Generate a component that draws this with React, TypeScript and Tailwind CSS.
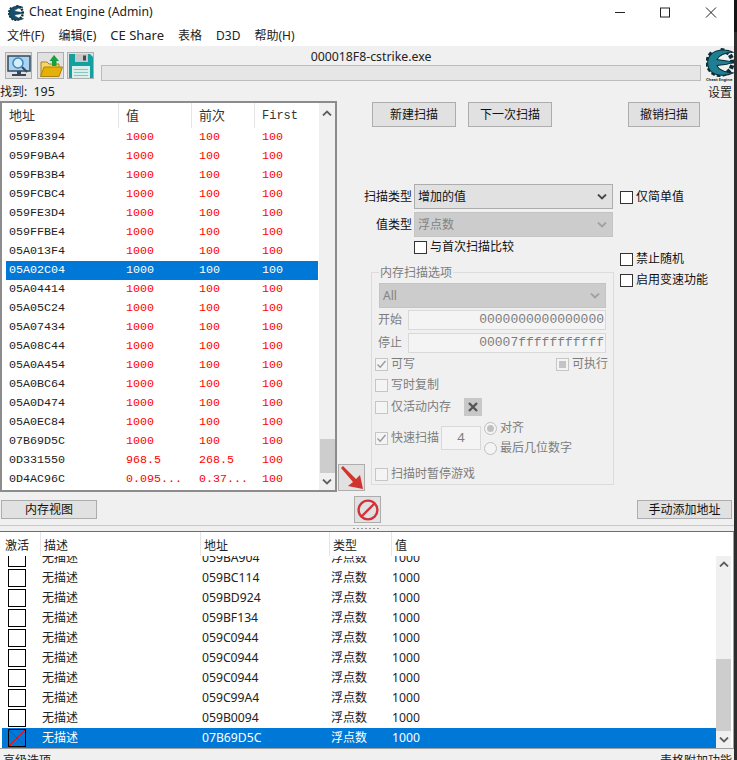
const cjk = "font-['Noto_Sans','Noto_Sans_CJK_SC',sans-serif]";

const scanRows = [
  ["059F8394", "1000", "100", "100"],
  ["059F9BA4", "1000", "100", "100"],
  ["059FB3B4", "1000", "100", "100"],
  ["059FCBC4", "1000", "100", "100"],
  ["059FE3D4", "1000", "100", "100"],
  ["059FFBE4", "1000", "100", "100"],
  ["05A013F4", "1000", "100", "100"],
  ["05A02C04", "1000", "100", "100"],
  ["05A04414", "1000", "100", "100"],
  ["05A05C24", "1000", "100", "100"],
  ["05A07434", "1000", "100", "100"],
  ["05A08C44", "1000", "100", "100"],
  ["05A0A454", "1000", "100", "100"],
  ["05A0BC64", "1000", "100", "100"],
  ["05A0D474", "1000", "100", "100"],
  ["05A0EC84", "1000", "100", "100"],
  ["07B69D5C", "1000", "100", "100"],
  ["0D331550", "968.5", "268.5", "100"],
  ["0D4AC96C", "0.095...", "0.37...", "100"],
];

const tableRows = [
  "059BA904",
  "059BC114",
  "059BD924",
  "059BF134",
  "059C0944",
  "059C0944",
  "059C0944",
  "059C99A4",
  "059B0094",
  "07B69D5C",
];

function CeLogo({ w, h, fill, line }: { w: number; h: number; fill: string; line: string }) {
  const teeth = [100, 125, 150, 175, 200, 225, 250, 275, 300, 325, 350, 15, 40];
  return (
    <svg width={w} height={h} viewBox="0 0 32 34">
      <g fill={line}>
        {teeth.map((a) => (
          <rect key={a} x="14" y="0" width="4.5" height="5" transform={`rotate(${a - 90} 16 17)`} />
        ))}
      </g>
      <path
        d="M31 5 C24 1 12 1.500 6 7 C0 13 0 22 6 28 C12 33 24 33 32 29 C25 29 15 27 12.500 20.500 L24 19 L32 16.500 L12.500 13.500 C15 8 24 5.500 31 5 Z"
        fill={fill}
        stroke={line}
        strokeWidth="1.2"
      />
    </svg>
  );
}

function ScanIcon() {
  return (
    <svg width="24" height="22" viewBox="0 0 24 22">
      <rect x="1" y="1" width="22" height="15" fill="#a9d3f2" stroke="#36495a" strokeWidth="1.5" />
      <rect x="10" y="16" width="4" height="3" fill="#36495a" />
      <rect x="5" y="19" width="14" height="2" fill="#36495a" />
      <circle cx="11" cy="8" r="5" fill="#d5ecfb" stroke="#3f86bd" strokeWidth="1.5" />
      <path d="M15 12 L20 17" stroke="#36495a" strokeWidth="2" />
    </svg>
  );
}

function FolderIcon() {
  return (
    <svg width="24" height="24" viewBox="0 0 24 24">
      <path d="M2 8 H8 L10 10 H20 V22 H2 Z" fill="#f5d66a" stroke="#a88414" />
      <path d="M5 13 H23.500 L20 22.500 H1.500 Z" fill="#e5b108" stroke="#a88414" />
      <path d="M15 1 L20 7 H17.500 V12 H13 V7 H10.500 Z" fill="#17a03e" />
    </svg>
  );
}

function SaveIcon() {
  return (
    <svg width="24" height="24" viewBox="0 0 24 24">
      <path d="M0 0 H21 L24 3 V24 H0 Z" fill="#14a0a0" />
      <rect x="6" y="0" width="13" height="8" fill="#c8c8c8" />
      <rect x="14" y="1.500" width="3" height="5" fill="#4a4a4a" />
      <rect x="3" y="12" width="18" height="12" fill="#d9f0ea" />
      <path d="M5 15.500 H19 M5 18.500 H19 M5 21.500 H19" stroke="#8cc4bd" />
    </svg>
  );
}

function ArrowIcon() {
  return (
    <svg width="24" height="24" viewBox="0 0 24 24">
      <path d="M1 2 L3 0 L16 13 L20 9 L23 23 L8 20 L13 16 Z" fill="#d2332c" />
    </svg>
  );
}

function StopIcon() {
  return (
    <svg width="24" height="24" viewBox="0 0 24 24" fill="none" stroke="#d2333a" strokeWidth="2.400">
      <circle cx="12" cy="12" r="9.400" />
      <path d="M5.500 18.500 L18.500 5.500" />
    </svg>
  );
}

function Chevron({ up, color = "#5f5f5f" }: { up?: boolean; color?: string }) {
  return (
    <svg width="10" height="6" viewBox="0 0 10 6" fill="none" stroke={color} strokeWidth="1.800">
      <path d={up ? "M1 5.500 L5 1.500 L9 5.500" : "M1 0.500 L5 4.500 L9 0.500"} />
    </svg>
  );
}

function SelectBox({ text, disabled, w }: { text: string; disabled?: boolean; w: string }) {
  return (
    <div
      className={`flex h-[25px] shrink-0 items-center justify-between border pl-[3px] pr-[5px] text-[12px] ${w} ${
        disabled ? "border-[#c4c4c4] bg-[#cccccc] text-[#838383]" : "border-[#adadad] bg-[#e1e1e1] text-[#111]"
      }`}
    >
      <span>{text}</span>
      <Chevron color={disabled ? "#a0a0a0" : "#444"} />
    </div>
  );
}

function Check({ label, disabled, state }: { label: string; disabled?: boolean; state?: "tick" | "mixed" }) {
  return (
    <div className={`flex h-[20px] items-center gap-[3px] text-[12px] ${disabled ? "text-[#7d7d7d]" : "text-[#111]"}`}>
      <span
        className={`flex h-[13px] w-[13px] items-center justify-center border ${
          disabled ? "border-[#c6c6c6] bg-[#f4f4f4]" : "border-[#333] bg-white"
        }`}
      >
        {state === "tick" && (
          <svg width="11" height="11" viewBox="0 0 11 11" fill="none" stroke="#9a9a9a" strokeWidth="1.400">
            <path d="M1.500 5.500 L4.200 8.200 L9.500 2" />
          </svg>
        )}
        {state === "mixed" && <span className="h-[7px] w-[7px] bg-[#c4c4c4]" />}
      </span>
      <span>{label}</span>
    </div>
  );
}

function Radio({ label, on }: { label: string; on?: boolean }) {
  return (
    <div className="flex h-[16px] items-center gap-[3px] text-[12px] text-[#7d7d7d]">
      <span className="flex h-[13px] w-[13px] items-center justify-center rounded-full border border-[#c0c0c0] bg-[#f4f4f4]">
        {on && <span className="h-[7px] w-[7px] rounded-full bg-[#c0c0c0]" />}
      </span>
      <span>{label}</span>
    </div>
  );
}

function Btn({ text, w, h = "h-[25px]" }: { text: string; w: string; h?: string }) {
  return (
    <div className={`flex items-center justify-center border border-[#adadad] bg-[#e1e1e1] text-[12px] text-[#111] ${w} ${h}`}>
      {text}
    </div>
  );
}

function IconBtn({ children }: { children: React.ReactNode }) {
  return (
    <div className="flex h-[27px] w-[27px] items-center justify-center overflow-hidden border border-[#adadad] bg-[#e1e1e1]">
      {children}
    </div>
  );
}

export default function App() {
  return (
    <div className={`flex h-[760px] w-[737px] overflow-hidden ${cjk}`}>
      <div className="flex h-full w-[734px] shrink-0 flex-col bg-white">
        {/* title bar */}
        <div className="flex h-[25px] shrink-0 items-center pl-[8px] text-[12.200px] text-[#222]">
          <CeLogo w={16} h={16} fill="#14506e" line="#0b2f3a" />
          <span className="ml-[5px] flex-1">Cheat Engine (Admin)</span>
          <svg width="110" height="25" viewBox="0 0 110 25" fill="none" stroke="#222" className="mr-[9px]">
            <path d="M0 12.500 H10" />
            <rect x="45.500" y="8" width="9" height="9" />
            <path d="M91 7.500 L101 17.500 M101 7.500 L91 17.500" />
          </svg>
        </div>
        {/* menu */}
        <div className="flex h-[21px] shrink-0 items-center gap-[14px] pl-[7px] text-[12px] text-[#222]">
          <span>文件(F)</span>
          <span>编辑(E)</span>
          <span className="text-[13px]">CE Share</span>
          <span>表格</span>
          <span>D3D</span>
          <span>帮助(H)</span>
        </div>

        <div className="flex flex-1 flex-col bg-[#f0f0f0]">
          {/* toolbar */}
          <div className="flex h-[55px] shrink-0">
            <div className="flex w-[101px] shrink-0 flex-col pl-[5px] pt-[6px]">
              <div className="flex gap-[3px]">
                <div className="mr-[2px]"><IconBtn><ScanIcon /></IconBtn></div>
                <IconBtn><FolderIcon /></IconBtn>
                <IconBtn><SaveIcon /></IconBtn>
              </div>
              <div className="-ml-[5px] mt-[5px] whitespace-pre text-[12px] leading-[16px] text-[#222]">
                找到:  <span className="text-[12.500px]">195</span>
              </div>
            </div>
            <div className="flex w-[600px] shrink-0 flex-col">
              <div className="mt-[3px] pr-[60px] text-center text-[12.300px] leading-[16px] text-[#222]">000018F8-cstrike.exe</div>
              <div className="h-[16px] border border-[#bcbcbc] bg-[#e6e6e6]" />
            </div>
            <div className="flex flex-1 flex-col items-start pl-[5px] pt-[2px]">
              <CeLogo w={28} h={34} fill="#1f7f92" line="#0b2f3a" />
              <span className="h-[5px] whitespace-nowrap text-[4px] font-bold leading-[5px] text-[#0b2f3a]">Cheat Engine</span>
              <span className="ml-[2px] mt-[3px] text-[12px] leading-[16px] text-[#222]">设置</span>
            </div>
          </div>

          {/* scan area */}
          <div className="flex shrink-0">
            {/* result list */}
            <div className="flex h-[391px] w-[337px] shrink-0 overflow-hidden border-2 border-[#8c8c8c] bg-white font-['Liberation_Mono','Noto_Sans_CJK_SC',monospace] text-[11.700px]">
              <div className="flex-1 overflow-hidden">
                <div className="flex h-[25px] items-center text-[#333]">
                  <span className="h-full w-[117px] border-r border-[#e5e5e5] pl-[7px] text-[13px] leading-[27px]">地址</span>
                  <span className="h-full w-[73px] border-r border-[#e5e5e5] pl-[7px] text-[13px] leading-[27px]">值</span>
                  <span className="h-full w-[63px] border-r border-[#e5e5e5] pl-[7px] text-[13px] leading-[27px]">前次</span>
                  <span className="h-full w-[64px] pl-[7px] text-[12px] leading-[27px]">First</span>
                </div>
                <div className="ml-[4px] mr-[1px]">
                  {scanRows.map(([addr, val, prev, first], i) => {
                    const sel = i === 7;
                    return (
                      <div key={addr} className={`flex h-[19px] items-center ${sel ? "bg-[#0078d7] text-white" : "text-[#222]"}`}>
                        <span className="w-[117px] pl-[3px]">{addr}</span>
                        <span className={`w-[73px] pl-[3px] ${sel ? "" : "text-[#ff0000]"}`}>{val}</span>
                        <span className={`w-[63px] pl-[3px] ${sel ? "" : "text-[#ff0000]"}`}>{prev}</span>
                        <span className={`w-[59px] pl-[3px] ${sel ? "" : "text-[#ff0000]"}`}>{first}</span>
                      </div>
                    );
                  })}
                </div>
              </div>
              <div className="flex w-[16px] shrink-0 flex-col items-center bg-[#f0f0f0] pt-[7px]">
                <Chevron up />
                <div className="mt-[323px] h-[34px] w-[15px] bg-[#cdcdcd]" />
                <div className="mt-[6px]"><Chevron /></div>
              </div>
            </div>

            {/* arrow */}
            <div className="flex w-[34px] shrink-0 flex-col justify-end pb-[1px] pl-[1px]">
              <IconBtn><ArrowIcon /></IconBtn>
            </div>

            {/* scan form */}
            <div className="flex flex-1 flex-col">
              <div className="mt-[1px] flex pl-[1px]">
                <Btn text="新建扫描" w="w-[84px]" />
                <div className="ml-[12px]"><Btn text="下一次扫描" w="w-[84px]" /></div>
                <div className="ml-[76px]"><Btn text="撤销扫描" w="w-[72px]" /></div>
              </div>
              <div className="mt-[57px] flex">
                <div className="w-[243px] shrink-0">
                  <div className="flex items-center justify-end gap-[2px] pr-[1px] text-[12px] text-[#111]">
                    <span className="whitespace-nowrap">扫描类型</span>
                    <SelectBox text="增加的值" w="w-[199px]" />
                  </div>
                  <div className="mt-[3px] flex items-center justify-end gap-[2px] pr-[1px] text-[12px] text-[#111]">
                    <span className="whitespace-nowrap">值类型</span>
                    <SelectBox text="浮点数" disabled w="w-[199px]" />
                  </div>
                  <div className="h-[20px] pl-[43px]">
                    <Check label="与首次扫描比较" />
                  </div>
                  {/* memory options group */}
                  <div className="relative mt-[15px] h-[213px] w-[243px] border border-[#dcdcdc] px-[7px] pt-[10px]">
                    <span className="absolute -top-[9px] left-[7px] bg-[#f0f0f0] px-[1px] text-[12px] leading-[17px] text-[#7d7d7d]">内存扫描选项</span>
                    <SelectBox text="All" disabled w="w-[227px]" />
                    <div className="-ml-[1px] mt-[2px] flex h-[20px] items-center text-[12px] text-[#7d7d7d]">
                      <span className="w-[30px] shrink-0">开始</span>
                      <div className="flex h-[20px] flex-1 items-center justify-end border border-[#d9d9d9] bg-[#f4f4f4] pr-[1px] font-['Liberation_Mono',monospace] text-[13px]">0000000000000000</div>
                    </div>
                    <div className="-ml-[1px] mt-[3px] flex h-[20px] items-center text-[12px] text-[#7d7d7d]">
                      <span className="w-[30px] shrink-0">停止</span>
                      <div className="flex h-[20px] flex-1 items-center justify-end border border-[#d9d9d9] bg-[#f4f4f4] pr-[1px] font-['Liberation_Mono',monospace] text-[13px]">00007fffffffffff</div>
                    </div>
                    <div className="-ml-[4px] -mr-[2px] mt-[1px] flex h-[20px] items-center justify-between">
                      <Check label="可写" disabled state="tick" />
                      <Check label="可执行" disabled state="mixed" />
                    </div>
                    <div className="-ml-[4px] mt-[1px] flex h-[20px] items-center">
                      <Check label="写时复制" disabled />
                    </div>
                    <div className="-ml-[4px] mt-[2px] flex h-[20px] items-center">
                      <Check label="仅活动内存" disabled />
                      <div className="ml-[13px] flex h-[18px] w-[18px] items-center justify-center bg-[#c8c8c8] text-[#555]">
                        <svg width="10" height="10" viewBox="0 0 10 10" stroke="currentColor" strokeWidth="2.400">
                          <path d="M1 1 L9 9 M9 1 L1 9" />
                        </svg>
                      </div>
                    </div>
                    <div className="-ml-[4px] mt-[9px] flex h-[24px] items-center">
                      <Check label="快速扫描" disabled state="tick" />
                      <div className="ml-[2px] flex h-[24px] w-[40px] items-center justify-center border border-[#d9d9d9] bg-[#f4f4f4] text-[13px] text-[#7d7d7d]">4</div>
                      <div className="ml-[3px] flex flex-col gap-[4px]">
                        <Radio label="对齐" on />
                        <Radio label="最后几位数字" />
                      </div>
                    </div>
                    <div className="-ml-[4px] mt-[14px] flex h-[20px] items-center">
                      <Check label="扫描时暂停游戏" disabled />
                    </div>
                  </div>
                </div>
                <div className="ml-[6px] flex flex-col pt-[3px]">
                  <Check label="仅简单值" />
                  <div className="mt-[42px]"><Check label="禁止随机" /></div>
                  <div className="mt-[1px]"><Check label="启用变速功能" /></div>
                </div>
              </div>
            </div>
          </div>

          {/* bottom buttons */}
          <div className="flex h-[33px] shrink-0 items-center pl-[1px] pr-[2px] pt-[2px]">
            <Btn text="内存视图" w="w-[96px]" h="h-[19px]" />
            <div className="ml-[257px]"><IconBtn><StopIcon /></IconBtn></div>
            <div className="ml-auto"><Btn text="手动添加地址" w="w-[95px]" h="h-[19px]" /></div>
          </div>

          {/* splitter */}
          <div className="relative h-[7px] shrink-0 border-y border-t-[#c8c8c8] border-b-[#6e6e6e]">
            <span className="absolute left-[353px] top-[2px] h-[1px] w-[28px] bg-[repeating-linear-gradient(90deg,#999_0_2px,transparent_2px_4px)]" />
          </div>

          {/* address table */}
          <div className="flex h-[217px] shrink-0 flex-col overflow-hidden border-b border-r border-[#a0a0a0] bg-white text-[12px] text-[#222]">
            <div className="relative z-10 flex h-[24px] shrink-0 items-start overflow-hidden bg-white">
              <span className="h-full w-[41px] border-r border-[#e5e5e5] pl-[5px] leading-[28px]">激活</span>
              <span className="h-full w-[160px] border-r border-[#e5e5e5] pl-[3px] leading-[28px]">描述</span>
              <span className="h-full w-[129px] border-r border-[#e5e5e5] pl-[3px] leading-[28px]">地址</span>
              <span className="h-full w-[62px] border-r border-[#e5e5e5] pl-[3px] leading-[28px]">类型</span>
              <span className="h-full pl-[3px] leading-[28px]">值</span>
            </div>
            <div className="flex h-[192px] shrink-0">
              <div className="-mt-[8px] flex-1 pl-[2px]">
                {tableRows.map((addr, i) => {
                  const sel = i === 9;
                  return (
                    <div key={i} className={`flex h-[20px] items-center ${sel ? "bg-[#0078d7] text-white" : ""}`}>
                      <span className="flex w-[40px] pl-[6px]">
                        <span className="relative h-[18px] w-[18px] border border-black">
                          {sel && (
                            <svg width="16" height="16" viewBox="0 0 16 16" stroke="#ff0000" className="absolute inset-0">
                              <path d="M0 16 L16 0 M0 0 L16 16" />
                            </svg>
                          )}
                        </span>
                      </span>
                      <span className="w-[160px]">无描述</span>
                      <span className="w-[129px] text-[12.200px]">{addr}</span>
                      <span className="w-[61px]">浮点数</span>
                      <span className="text-[12.200px]">1000</span>
                    </div>
                  );
                })}
              </div>
              <div className="mr-[2px] flex w-[15px] shrink-0 flex-col items-center bg-[#f0f0f0] pt-[5px]">
                <Chevron up />
                <div className="mt-[92px] h-[72px] w-[15px] bg-[#cdcdcd]" />
                <div className="mt-[6px]"><Chevron /></div>
              </div>
            </div>
          </div>

          {/* status */}
          <div className="flex flex-1 items-start justify-between overflow-hidden pl-[3px] pr-[2px] pt-[3px] text-[12px] leading-[17px] text-[#222]">
            <span>高级选项</span>
            <span>表格附加功能</span>
          </div>
        </div>
      </div>
      <div className="flex flex-1 flex-col bg-[#2d2d2d]">
        <div className="h-[32px] bg-[#141414]" />
      </div>
    </div>
  );
}
